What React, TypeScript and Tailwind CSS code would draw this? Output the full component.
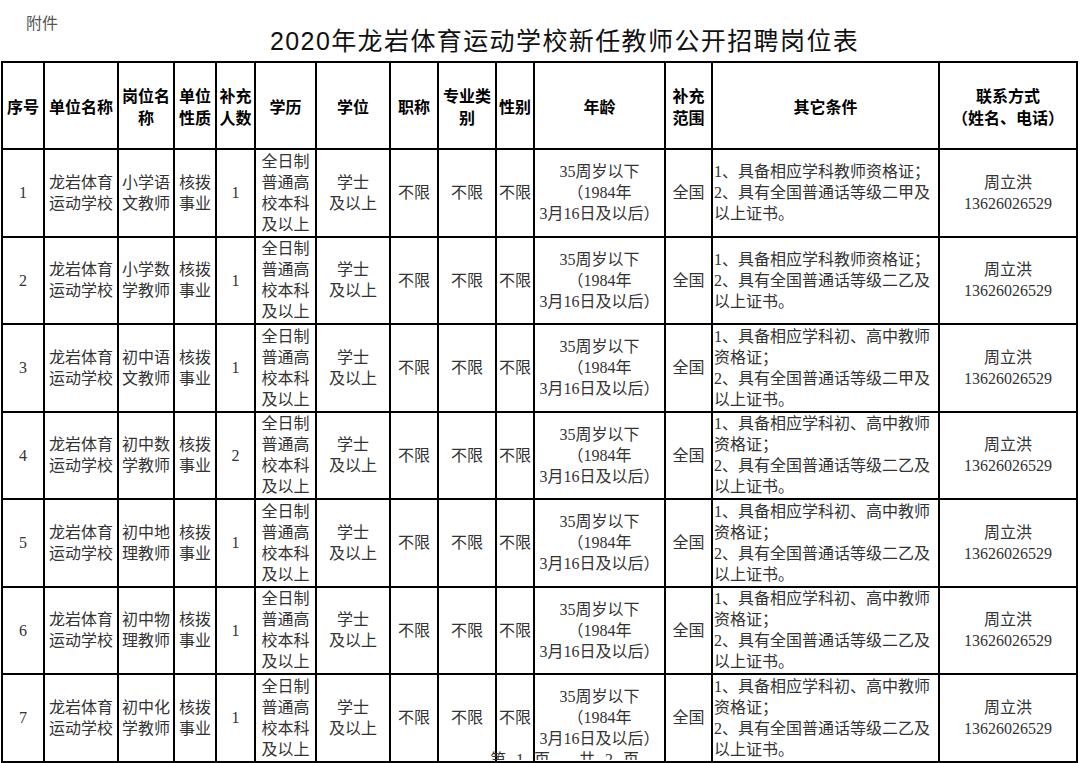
const serif = "font-['Liberation_Serif','Noto_Sans_CJK_SC',serif]";

const headers: { lines: string[]; w: string }[] = [
  { lines: ['序号'], w: 'w-[42px]' },
  { lines: ['单位名称'], w: 'w-[74px]' },
  { lines: ['岗位名', '称'], w: 'w-[56px]' },
  { lines: ['单位', '性质'], w: 'w-[42px]' },
  { lines: ['补充', '人数'], w: 'w-[39px]' },
  { lines: ['学历'], w: 'w-[61px]' },
  { lines: ['学位'], w: 'w-[74px]' },
  { lines: ['职称'], w: 'w-[48px]' },
  { lines: ['专业类', '别'], w: 'w-[58px]' },
  { lines: ['性别'], w: 'w-[38px]' },
  { lines: ['年龄'], w: 'w-[131px]' },
  { lines: ['补充', '范围'], w: 'w-[47px]' },
  { lines: ['其它条件'], w: 'w-[227px]' },
  { lines: ['联系方式', '（姓名、电话）'], w: 'w-[138px]' },
];

const basic = '1、具备相应学科教师资格证；';
const senior = ['1、具备相应学科初、高中教师', '资格证；'];

const rows = [
  { no: '1', post: ['小学语', '文教师'], count: '1', cond: [basic, '2、具有全国普通话等级二甲及', '以上证书。'] },
  { no: '2', post: ['小学数', '学教师'], count: '1', cond: [basic, '2、具有全国普通话等级二乙及', '以上证书。'] },
  { no: '3', post: ['初中语', '文教师'], count: '1', cond: [...senior, '2、具有全国普通话等级二甲及', '以上证书。'] },
  { no: '4', post: ['初中数', '学教师'], count: '2', cond: [...senior, '2、具有全国普通话等级二乙及', '以上证书。'] },
  { no: '5', post: ['初中地', '理教师'], count: '1', cond: [...senior, '2、具有全国普通话等级二乙及', '以上证书。'] },
  { no: '6', post: ['初中物', '理教师'], count: '1', cond: [...senior, '2、具有全国普通话等级二乙及', '以上证书。'] },
  { no: '7', post: ['初中化', '学教师'], count: '1', cond: [...senior, '2、具有全国普通话等级二乙及', '以上证书。'] },
];

function Lines({ lines }: { lines: string[] }) {
  return (
    <>
      {lines.map((l, i) => (
        <div key={i} className="whitespace-nowrap">{l}</div>
      ))}
    </>
  );
}

const td = 'border-2 border-black p-0 text-center align-middle';

export default function App() {
  return (
    <div className="relative w-[1080px] h-[763px] overflow-hidden bg-white">
      {/* 附件 */}
      <div className="pl-[26px] pt-[14px] text-[16px] leading-[16px] text-[#555] font-['Noto_Sans_CJK_SC',sans-serif]">
        附件
      </div>

      {/* Title */}
      <div className="pl-[270px] text-[25px] leading-[22px] tracking-[1.4px] text-[#111] font-['Liberation_Sans','Noto_Sans_CJK_SC',sans-serif]">
        2020年龙岩体育运动学校新任教师公开招聘岗位表
      </div>

      <table className={`mt-[9px] ml-[1px] w-[1075px] table-fixed border-collapse ${serif} text-[16px] leading-[21px] text-[#333]`}>
        <colgroup>
          {headers.map((h, i) => (
            <col key={i} className={h.w} />
          ))}
        </colgroup>
        <thead>
          <tr className="h-[87px]">
            {headers.map((h, i) => (
              <th key={i} className={`${td} font-bold leading-[22px] text-black font-['Noto_Sans_CJK_SC',sans-serif]`}>
                <Lines lines={h.lines} />
              </th>
            ))}
          </tr>
        </thead>
        <tbody>
          {rows.map((r) => (
            <tr key={r.no} className="h-[87.5px]">
              <td className={td}>{r.no}</td>
              <td className={td}>
                <Lines lines={['龙岩体育', '运动学校']} />
              </td>
              <td className={td}>
                <Lines lines={r.post} />
              </td>
              <td className={td}>
                <Lines lines={['核拨', '事业']} />
              </td>
              <td className={td}>{r.count}</td>
              <td className={td}>
                <Lines lines={['全日制', '普通高', '校本科', '及以上']} />
              </td>
              <td className={td}>
                <Lines lines={['学士', '及以上']} />
              </td>
              <td className={td}>不限</td>
              <td className={td}>不限</td>
              <td className={td}>不限</td>
              <td className={td}>
                <Lines lines={['35周岁以下', '（1984年', '3月16日及以后）']} />
              </td>
              <td className={td}>全国</td>
              <td className={`${td} !text-left pl-[1px]`}>
                <Lines lines={r.cond} />
              </td>
              <td className={td}>
                <Lines lines={['周立洪', '13626026529']} />
              </td>
            </tr>
          ))}
        </tbody>
      </table>

      {/* page footer peeking over the table bottom */}
      <div className="absolute left-[490px] top-[751px] h-[9px] overflow-hidden">
        <span className={`block whitespace-nowrap text-[16px] leading-[18px] tracking-[3px] text-[#333] ${serif}`}>
          第 1 页， 共 2 页
        </span>
      </div>
    </div>
  );
}
